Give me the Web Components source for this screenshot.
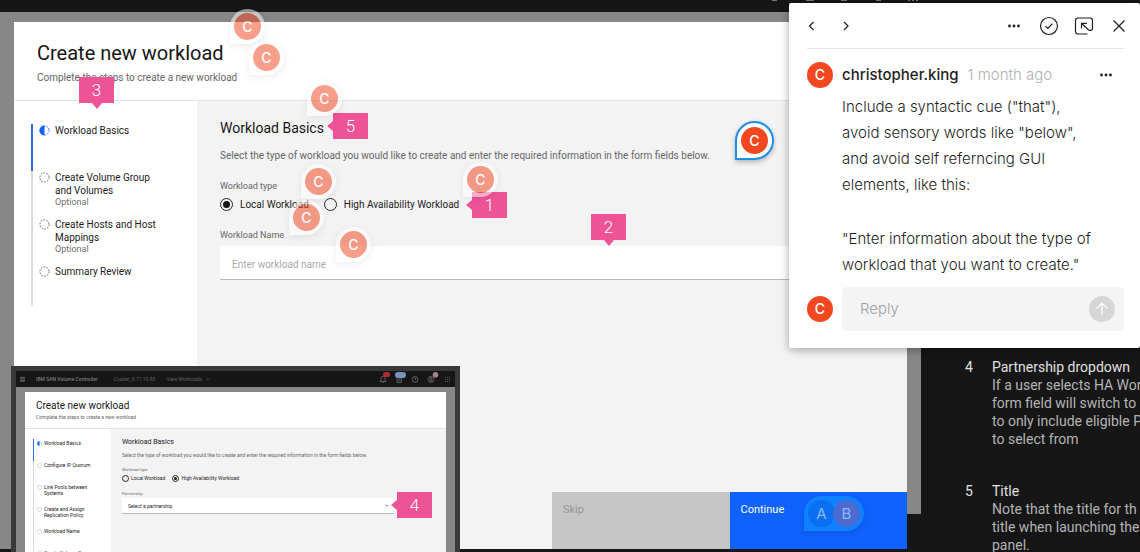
<!DOCTYPE html>
<html lang="en">
<head>
<meta charset="utf-8">
<title>Create new workload – design review</title>
<style>
  html, body { height: 100%; }
  body { margin: 0; background: #161616; font-family: Roboto, "Liberation Sans", sans-serif; overflow: hidden; }
</style>
</head>
<body>
<review-canvas></review-canvas>

<script>
const define = (name, markup, setup) => customElements.define(name, class extends HTMLElement {
  constructor() {
    super();
    this.attachShadow({ mode: 'open' });
  }
  connectedCallback() {
    if (this.shadowRoot.childNodes.length) return;
    const t = document.createElement('template');
    t.innerHTML = typeof markup === 'function' ? markup(this) : markup;
    this.shadowRoot.append(t.content.cloneNode(true));
    if (setup) setup(this);
  }
});

/* One step of the progress list */
define('progress-step', el => `
<style>
  :host { display: flex; box-sizing: border-box; min-height: var(--step-h); gap: var(--step-gap);
          padding-left: var(--step-pad); border-left: var(--step-line) solid #dcdcdc;
          font-size: var(--fs-body); line-height: var(--lh-step); color: #1c1c1c; }
  :host([current]) { border-color: #2b6be6; }
  svg { flex: none; width: var(--step-icon); height: var(--step-icon); margin-top: var(--step-icon-top); }
  small { display: block; font-size: var(--fs-label); line-height: var(--lh-opt); color: #6f6f6f; }
</style>
<svg viewBox="0 0 12 12" fill="none">${el.hasAttribute('current')
  ? '<path d="M6 .5a5.5 5.5 0 0 0 0 11z" fill="#0f62fe"/><circle cx="6" cy="6" r="5" stroke="#0f62fe" stroke-dasharray="1.8 1.3"/>'
  : '<circle cx="6" cy="6" r="5" stroke="#525252" stroke-dasharray="1.7 1.44"/>'}</svg>
<div><slot></slot>${el.hasAttribute('optional') ? '<small>Optional</small>' : ''}</div>`);

/* Labelled pair of radio buttons; the value attribute names the chosen one */
define('radio-group', el => `
<style>
  :host { display: block; color: #1c1c1c; }
  fieldset { border: 0; margin: 0; padding: 0; display: flex; gap: var(--radio-gap); min-width: 0; }
  legend { padding: 0; font-size: var(--fs-label); line-height: var(--lh-label); margin-bottom: var(--legend-gap); color: #666; }
  label { display: flex; align-items: center; gap: var(--radio-label-gap); font-size: var(--fs-body); line-height: var(--radio); white-space: nowrap; }
  input { appearance: none; margin: 0; box-sizing: border-box; width: var(--radio); height: var(--radio);
          border: 1px solid #262626; border-radius: 50%; display: grid; place-items: center; }
  input:checked::before { content: ""; width: var(--dot); height: var(--dot); border-radius: 50%; background: #161616; }
</style>
<fieldset><legend>Workload type</legend>${['Local Workload', 'High Availability Workload'].map((t, i) =>
  `<label for="r${i}"><input type="radio" name="kind" id="r${i}" ${el.getAttribute('value') === String(i) ? 'checked' : ''}>${t}</label>`).join('')}
</fieldset>`);

define('text-field', el => `
<style>
  :host { display: block; }
  label { display: block; font-size: var(--fs-label); line-height: var(--lh-label); color: #666; margin-bottom: 5px; }
  input { display: block; box-sizing: border-box; width: 100%; height: 34px; border: 0; border-bottom: 1px solid #b8b8b8;
          background: #fff; padding: 3px 12px 0; font: 10px Roboto, "Liberation Sans", sans-serif; }
  input::placeholder { color: #a8a8a8; opacity: 1; }
</style>
<label for="f">${el.getAttribute('label')}</label>
<input id="f" type="text" placeholder="${el.getAttribute('placeholder')}">`);

define('select-field', el => `
<style>
  :host { display: block; }
  label { display: block; font-size: var(--fs-label); line-height: var(--lh-label); color: #6f6f6f; margin-bottom: 2px; }
  .box { display: flex; align-items: center; background: #fff; border-bottom: 1px solid #b8b8b8; height: 15px; padding-right: 5px; }
  select { appearance: none; flex: 1; border: 0; margin: 0; padding: 0 6px; background: none; color: #262626;
           font: 5px/14px Roboto, "Liberation Sans", sans-serif; }
  svg { width: 4px; height: 3px; }
</style>
<label for="s">${el.getAttribute('label')}</label>
<div class="box"><select id="s"><option>Select a partnership</option></select>
<svg viewBox="0 0 4 3" fill="none" stroke="#525252" stroke-width=".7"><path d="M.4.6 2 2.2 3.6.6"/></svg></div>`);

/* Dialog: header, progress list, form area and optional footer */
define('workload-dialog', `
<style>
  :host { display: grid; grid-template-rows: auto 1fr; background: #fff; min-width: 0; }
  header { padding: var(--head-pad); border-bottom: 1px solid #e4e4e4; }
  h1 { margin: 0; font-weight: 400; font-size: var(--fs-title); line-height: var(--lh-title); color: #161616; }
  header p { margin: var(--sub-gap) 0 0; font-size: var(--fs-body); line-height: var(--lh-sub); color: #666; }
  .body { display: grid; grid-template-columns: var(--nav-w) minmax(0, 1fr); min-height: 0; }
  nav { padding: var(--nav-pad); }
  main { background: #f3f3f3; display: flex; flex-direction: column; }
  .form { flex: 1; padding: var(--form-pad); }
  h2 { margin: 0; font-weight: 400; font-size: var(--fs-h2); line-height: var(--lh-h2); color: #161616; }
  .form > p { margin: var(--desc-gap) 0 var(--desc-after); font-size: var(--fs-body); line-height: var(--lh-sub); color: #666; white-space: nowrap; }
</style>
<header><h1>Create new workload</h1><p>Complete the steps to create a new workload</p></header>
<div class="body">
  <nav><slot name="steps"></slot></nav>
  <main>
    <div class="form">
      <h2>Workload Basics</h2>
      <p>Select the type of workload you would like to create and enter the required information in the form fields below.</p>
      <slot></slot>
    </div>
    <slot name="footer"></slot>
  </main>
</div>`);

define('dialog-actions', `
<style>
  :host { display: grid; grid-template-columns: 2fr 1fr 1fr; height: 57px; }
  button { border: 0; border-radius: 0; text-align: left; padding: 11px 11px; display: flex; align-items: flex-start;
           font: 11px/13px Roboto, "Liberation Sans", sans-serif; }
  .skip { grid-column: 2; background: #c6c6c6; color: #979797; }
  .go { background: #0f62fe; color: #fff; }
</style>
<button class="skip" type="button" disabled>Skip</button><button class="go" type="button">Continue</button>`);

/* Small-scale product window shown over the main frame */
define('inset-window', `
<style>
  :host { display: flex; flex-direction: column; box-sizing: border-box; border: 5px solid #393939; border-bottom: 0; background: #878787; overflow: hidden;
    --fs-title: 10px; --lh-title: 12px; --sub-gap: 1px; --fs-body: 5px; --lh-sub: 8px; --fs-label: 4px; --lh-label: 5px;
    --head-pad: 8px 11px 7px; --nav-w: 86px; --nav-pad: 10px 8px 0; --form-pad: 8px 52px 0 11px;
    --fs-h2: 7px; --lh-h2: 10px; --desc-gap: 4px; --desc-after: 8px;
    --step-h: 22px; --step-gap: 2px; --step-pad: 3px; --step-line: 1px; --step-icon: 5px; --step-icon-top: 1px; --lh-step: 6px; --lh-opt: 5px;
    --radio: 7px; --dot: 3px; --radio-gap: 7px; --radio-label-gap: 2px; --legend-gap: 3px; }
  .bar { flex: none; display: flex; align-items: center; height: 16px; padding: 0 4px; background: #161616; color: #6f6f6f; font-size: 5px; }
  .bar b { font-weight: 500; margin-left: 11px; color: #7d7d7d; }
  .bar span { margin-left: 16px; color: #606060; }
  .bar .view { margin-left: 11px; }
  .bar .chev { width: 4px; height: 3px; margin-left: 4px; }
  .bar .icons { margin-left: auto; width: 76px; height: 16px; }
  .bar .menu { width: 5px; height: 5px; }
  workload-dialog { flex: 1; margin: 5px 9px 0; }
  progress-step { padding-top: 1px; }
  select-field { margin-top: 9px; }
</style>
<div class="bar">
  <svg class="menu" viewBox="0 0 5 5" stroke="#6f6f6f" stroke-width=".8"><path d="M0 .5h5M0 2h5M0 3.5h5M0 4.8h5"/></svg>
  <b>IBM SAN Volume Controller</b><span>Cluster_9.71.19.88</span><span class="view">View Workloads</span>
  <svg class="chev" viewBox="0 0 4 3" fill="none" stroke="#606060" stroke-width=".7"><path d="M.4.6 2 2.2 3.6.6"/></svg>
  <svg class="icons" viewBox="0 0 76 16" fill="none" stroke="#777" stroke-width=".7">
    <path d="M5 10.5h6l-1-1.6V7.4a2 2 0 0 0-4 0v1.5zM7.2 11.4h1.6"/><rect x="22" y="6" width="4.6" height="5.4"/><path d="M23 8h2.6M23 9.7h2.6"/>
    <circle cx="40" cy="8.4" r="2.9"/><path d="M39 7.7q1-1.6 2 0 0 .6-1 1.1M40 9.8v.5"/>
    <circle cx="56" cy="8.4" r="2.9"/><circle cx="56" cy="7.6" r="1"/><path d="M54 10.4q2-1.8 4 0"/>
    <path d="M70 6.2h1m1 0h1m1 0h1M70 8.4h1m1 0h1m1 0h1M70 10.6h1m1 0h1m1 0h1"/>
    <rect x="8" y="1" width="7" height="5" rx="2.5" fill="#b02a33" stroke="none"/>
    <rect x="20" y="1" width="11" height="6" rx="3" fill="#7891bd" stroke="none"/>
    <circle cx="60.500" cy="3.700" r="2.800" fill="#a88488" stroke="none"/>
  </svg>
</div>
<workload-dialog>
  <progress-step slot="steps" current>Workload Basics</progress-step>
  <progress-step slot="steps">Configure IP Quorum</progress-step>
  <progress-step slot="steps">Link Pools between<br>Systems</progress-step>
  <progress-step slot="steps">Create and Assign<br>Replication Policy</progress-step>
  <progress-step slot="steps">Workload Name</progress-step>
  <progress-step slot="steps">Create Volume Group</progress-step>
  <radio-group value="1"></radio-group>
  <select-field label="Partnership"></select-field>
</workload-dialog>`);

/* Pink numbered marker; point="down" or "left" */
define('num-callout', `
<style>
  :host { position: absolute; width: 35px; height: 26px; background: #ee5396; color: #fff; display: grid; place-items: center;
          font-size: 17px; font-weight: 300; line-height: 26px; }
  :host::after { content: ""; position: absolute; border: 5px solid transparent; }
  :host([point="down"])::after { top: 100%; left: 13px; border-top: 6px solid #ee5396; border-bottom: 0; }
  :host([point="left"])::after { right: 100%; top: 8px; border-right: 6px solid #ee5396; border-left: 0; }
</style><slot></slot>`);

define('user-avatar', `
<style>
  :host { display: grid; place-items: center; flex: none; width: 26px; height: 26px; border-radius: 50%; background: #f24822; color: #fff;
          font: 500 14px/26px Inter, "Liberation Sans", sans-serif; }
</style><slot></slot>`);

define('comment-pin', `
<style>
  :host { position: absolute; box-sizing: border-box; display: flex; padding: 4px; background: #fff; border-radius: 18px 18px 18px 0;
          box-shadow: 0 2px 6px #0002; opacity: .52; }
  :host([active]) { opacity: 1; padding: 4px; border: 2px solid #1d8fe6; border-radius: 20px 20px 20px 0; box-shadow: 0 2px 5px #0004; }
  :host([group]) { opacity: 1; background: #0f80ff; }
  user-avatar { width: 27px; height: 27px; }
  :host([group]) user-avatar { background: #0a70f2; color: #8fb6f5; font-size: 15px; font-weight: 400; }
  :host([group]) user-avatar + user-avatar { background: #4a6cd2; margin-left: -2px; }
</style>`, el => {
  for (const c of el.getAttribute('who')) {
    const a = document.createElement('user-avatar');
    a.textContent = c;
    el.shadowRoot.append(a);
  }
});

define('comment-panel', `
<style>
  :host { position: absolute; box-sizing: border-box; background: #fff; border-radius: 2px; padding: 0 16px 17px 18px;
          box-shadow: 0 2px 10px #0005; font: 15px/26px Inter, "Liberation Sans", sans-serif; color: #1e1e1e; }
  .tools { display: flex; align-items: center; justify-content: space-between; height: 45px; border-bottom: 1px solid #e3e3e8; }
  .tools div { display: flex; gap: 15px; }
  .tools .right { margin-right: -5px; }
  button { border: 0; padding: 0; background: none; display: grid; place-items: center; width: 20px; height: 20px; flex: none; }
  .tools .left { margin-left: -6px; }
  svg { width: 20px; height: 20px; fill: none; stroke: #1e1e1e; stroke-width: 1.2; }
  .dots { fill: #1e1e1e; stroke: none; }
  .who { display: flex; align-items: center; gap: 9px; padding-top: 13px; }
  .who b { font-weight: 500; color: #1e1e1e; }
  .who time { color: #b0b0b0; font-weight: 300; }
  .who button { margin-left: auto; margin-right: 8px; }
  .text { margin: 6px 0 9px 35px; font-weight: 300; }
  p { margin: 0 0 28px; }
  p:last-child { margin: 0; }
  form { display: flex; align-items: center; gap: 9px; }
  .reply { flex: 1; min-width: 0; display: flex; align-items: center; height: 44px; border-radius: 5px; background: #f4f4f4; padding: 0 9px 0 18px; }
  input { flex: 1; min-width: 0; border: 0; padding: 0; background: none; font: 300 15px/20px Inter, "Liberation Sans", sans-serif; }
  input::placeholder { color: #a0a0a0; opacity: 1; }
  .send { width: 26px; height: 26px; border-radius: 50%; background: #d6d6d6; }
  .send svg { stroke: #fff; }
</style>
<div class="tools">
  <div class="left">
    <button type="button" aria-label="Previous comment"><svg viewBox="0 0 20 20"><path d="M12.500 6 8.500 10l4 4"/></svg></button>
    <button type="button" aria-label="Next comment"><svg viewBox="0 0 20 20"><path d="m8 6 4 4-4 4"/></svg></button>
  </div>
  <div class="right">
    <button type="button" aria-label="More"><svg class="dots" viewBox="0 0 20 20"><circle cx="5.500" cy="10" r="1.400"/><circle cx="10" cy="10" r="1.400"/><circle cx="14.500" cy="10" r="1.400"/></svg></button>
    <button type="button" aria-label="Resolve"><svg viewBox="0 0 20 20"><circle cx="10" cy="10" r="8.500"/><path d="m6.500 10.200 2.400 2.300 4.600-4.800"/></svg></button>
    <button type="button" aria-label="Undock"><svg viewBox="0 0 20 20"><path d="M13.500 18H4a2.500 2.500 0 0 1-2.500-2.500v-11A2.500 2.500 0 0 1 4 2h12a2.500 2.500 0 0 1 2.500 2.500v8a2.500 2.500 0 0 1-4.200 1.200L7.500 7.300M7.500 12.500V7.300h5.400"/></svg></button>
    <button type="button" aria-label="Close"><svg viewBox="0 0 20 20"><path d="m4.500 4.500 11 11m0-11-11 11"/></svg></button>
  </div>
</div>
<div class="who"><user-avatar>C</user-avatar><b>christopher.king</b><time>1 month ago</time>
  <button type="button" aria-label="Comment options"><svg class="dots" viewBox="0 0 20 20"><circle cx="5.500" cy="10" r="1.400"/><circle cx="10" cy="10" r="1.400"/><circle cx="14.500" cy="10" r="1.400"/></svg></button></div>
<div class="text">
  <p>Include a syntactic cue ("that"),<br>avoid sensory words like "below",<br>and avoid self referncing GUI<br>elements, like this:</p>
  <p>"Enter information about the type of<br>workload that you want to create."</p>
</div>
<form><user-avatar>C</user-avatar>
  <div class="reply"><input type="text" aria-label="Reply" placeholder="Reply">
  <button class="send" type="button" aria-label="Send"><svg viewBox="0 0 20 20"><path d="M10 16V4M4.500 9.500 10 4l5.500 5.500"/></svg></button></div>
</form>`);

define('design-note', el => `
<style>
  :host { display: grid; grid-template-columns: 27px 1fr; font-size: 14px; line-height: 18px; color: #b4b4b4; white-space: nowrap; }
  h3, b { margin: 0; font-size: 14px; font-weight: 400; line-height: 17px; color: #e0e0e0; }
  div { grid-column: 2; }
</style>
<b>${el.getAttribute('num')}</b><h3>${el.getAttribute('heading')}</h3><div><slot></slot></div>`);

define('review-canvas', `
<style>
  :host { position: relative; display: grid; grid-template-columns: minmax(0, 1fr) 219px; grid-template-rows: 12px 1fr 3px; height: 100%; overflow: hidden; background: #161616;
    --fs-title: 20px; --lh-title: 26px; --sub-gap: 5px; --fs-body: 10px; --lh-sub: 14px; --fs-label: 9px; --lh-label: 12px;
    --head-pad: 18px 23px 15px; --nav-w: 183px; --nav-pad: 23px 17px 0; --form-pad: 17px 12px 0 23px;
    --fs-h2: 14px; --lh-h2: 20px; --desc-gap: 11px; --desc-after: 17px;
    --step-h: 47px; --step-gap: 5px; --step-pad: 6px; --step-line: 2px; --step-icon: 11px; --step-icon-top: 1px; --lh-step: 13px; --lh-opt: 10px;
    --radio: 13px; --dot: 7px; --radio-gap: 15px; --radio-label-gap: 7px; --legend-gap: 6px; }
  .topbar { grid-column: 1 / -1; justify-self: end; width: 380px; height: 12px; }
  .frame { display: grid; grid-template-columns: 14px minmax(0, 1fr) 14px; }
  .rail { background: #878787; }
  .rail.end { margin-bottom: 35px; }
  .stage { background: #878787; display: flex; padding-top: 10px; }
  .stage workload-dialog { flex: 1; }
  progress-step:last-of-type { --step-h: 41px; }
  text-field { margin-top: 18px; }
  .notes { grid-row: 2 / 4; grid-column: 2; padding: 347px 0 0 44px; display: flex; flex-direction: column; gap: 35px; overflow: hidden; min-height: 0; }
  inset-window { position: absolute; left: 11px; top: 366px; width: 449px; bottom: 0; }
  comment-panel { right: 0; top: 3px; width: 351px; }
</style>
<svg class="topbar" viewBox="0 0 380 12" fill="none" stroke="#777"><path d="M12 .5h5M46 .5h8M81 .5h6M116 .5h5M148 .5h2m2 0h2m2 0h2"/></svg>
<div class="frame">
  <div class="rail"></div>
  <div class="stage">
    <workload-dialog>
      <progress-step slot="steps" current>Workload Basics</progress-step>
      <progress-step slot="steps" optional>Create Volume Group<br>and Volumes</progress-step>
      <progress-step slot="steps" optional>Create Hosts and Host<br>Mappings</progress-step>
      <progress-step slot="steps">Summary Review</progress-step>
      <radio-group value="0"></radio-group>
      <text-field label="Workload Name" placeholder="Enter workload name"></text-field>
      <dialog-actions slot="footer"></dialog-actions>
    </workload-dialog>
  </div>
  <div class="rail end"></div>
</div>
<div class="notes">
  <design-note num="4" heading="Partnership dropdown">If a user selects HA Wor<br>form field will switch to<br>to only include eligible P<br>to select from</design-note>
  <design-note num="5" heading="Title">Note that the title for th<br>title when launching the<br>panel.</design-note>
</div>
<inset-window></inset-window>
<num-callout point="down" style="left:79px;top:77px">3</num-callout>
<num-callout point="left" style="left:333px;top:113px">5</num-callout>
<num-callout point="left" style="left:472px;top:192px">1</num-callout>
<num-callout point="down" style="left:591px;top:214px">2</num-callout>
<num-callout point="left" style="left:397px;top:492px">4</num-callout>
<comment-pin who="C" style="left:230px;top:9px"></comment-pin>
<comment-pin who="C" style="left:249px;top:40px"></comment-pin>
<comment-pin who="C" style="left:307px;top:81px"></comment-pin>
<comment-pin who="C" style="left:301px;top:164px"></comment-pin>
<comment-pin who="C" style="left:463px;top:162px"></comment-pin>
<comment-pin who="C" style="left:289px;top:200px"></comment-pin>
<comment-pin who="C" style="left:336px;top:227px"></comment-pin>
<comment-pin who="C" active style="left:735px;top:121px"></comment-pin>
<comment-pin who="AB" group style="left:804px;top:496px"></comment-pin>
<comment-panel></comment-panel>`);
</script>
</body>
</html>
